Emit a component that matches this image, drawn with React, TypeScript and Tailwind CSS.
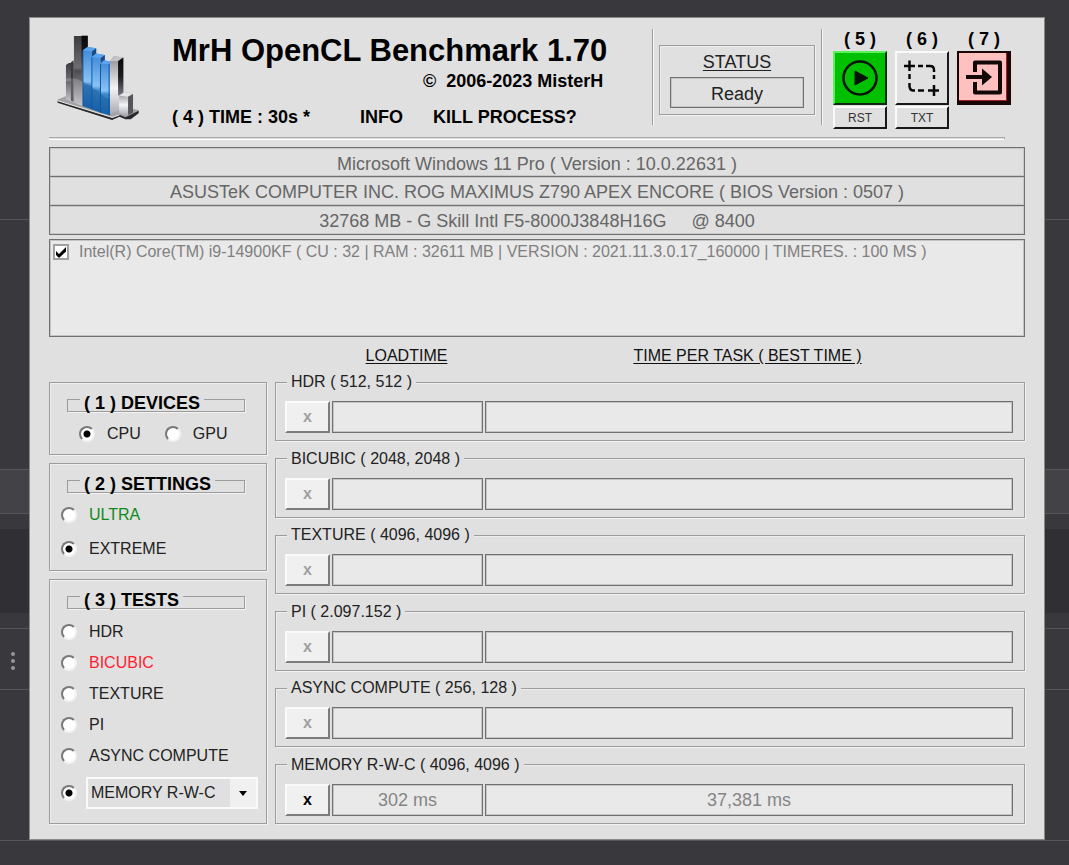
import { useState } from "react";
import clsx from "clsx";

type Result = {
  name: string;
  size: string;
  loadTime: string;
  bestTime: string;
};

const results: Result[] = [
  { name: "HDR", size: "( 512, 512 )", loadTime: "", bestTime: "" },
  { name: "BICUBIC", size: "( 2048, 2048 )", loadTime: "", bestTime: "" },
  { name: "TEXTURE", size: "( 4096, 4096 )", loadTime: "", bestTime: "" },
  { name: "PI", size: "( 2.097.152 )", loadTime: "", bestTime: "" },
  { name: "ASYNC COMPUTE", size: "( 256, 128 )", loadTime: "", bestTime: "" },
  { name: "MEMORY R-W-C", size: "( 4096, 4096 )", loadTime: "302 ms", bestTime: "37,381 ms" }
];

const systemInfo = [
  { label: "Operating system", value: "Microsoft Windows 11 Pro ( Version : 10.0.22631 )" },
  { label: "Mainboard", value: "ASUSTeK COMPUTER INC. ROG MAXIMUS Z790 APEX ENCORE ( BIOS Version : 0507 )" },
  { label: "Memory", value: "32768 MB - G Skill Intl F5-8000J3848H16G     @ 8400" }
];

const tests = [
  { name: "HDR", color: "text-[#222]" },
  { name: "BICUBIC", color: "text-[#ff2030]" },
  { name: "TEXTURE", color: "text-[#222]" },
  { name: "PI", color: "text-[#222]" },
  { name: "ASYNC COMPUTE", color: "text-[#222]" }
];

const groove = "border border-[#9c9c9c] shadow-[1px_1px_0_#f2f2f2,inset_1px_1px_0_#eeeeee]";
const edge = "border border-[#707070] shadow-[inset_0_0_0_1px_#c4c4c4]";
const field = "min-w-0 text-center outline-none";
const raised = "border-2 border-t-[#fafafa] border-l-[#fafafa]";

function Logo() {
  return (
    <svg viewBox="0 0 250 260" className="h-[87px] w-[83px] shrink-0" aria-hidden="true">
      <defs>
        <linearGradient id="steel" x1="0" y1="0" x2="0" y2="1">
          <stop offset="0" stopColor="#3c3c40" />
          <stop offset="0.45" stopColor="#6d6d72" />
          <stop offset="0.5" stopColor="#4b4b50" />
          <stop offset="1" stopColor="#b9b9c0" />
        </linearGradient>
        <linearGradient id="blue" x1="0" y1="0" x2="0" y2="1">
          <stop offset="0" stopColor="#3d86d6" />
          <stop offset="0.55" stopColor="#86c3f8" />
          <stop offset="0.62" stopColor="#3c86c8" />
          <stop offset="1" stopColor="#1768b4" />
        </linearGradient>
        <linearGradient id="silver" x1="0" y1="0" x2="0" y2="1">
          <stop offset="0" stopColor="#8d8d92" />
          <stop offset="0.55" stopColor="#f4f4f6" />
          <stop offset="1" stopColor="#a9abb4" />
        </linearGradient>
        <linearGradient id="shade" x1="0" y1="0" x2="0" y2="1">
          <stop offset="0" stopColor="#08080a" />
          <stop offset="0.5" stopColor="#1c1c1f" />
          <stop offset="1" stopColor="#77777f" />
        </linearGradient>
      </defs>
      <path d="M2 196 L28 186 L246 228 L246 236 L222 254 L206 256 L188 246 L166 257 L2 206 Z" fill="#a4a4a8" />
      <path d="M2 200 L168 252 L188 242 L206 250 L246 230 L246 238 L222 256 L206 256 L188 248 L166 258 L2 206 Z" fill="#29292c" />
      <path d="M2 200 L166 250 L188 243" fill="none" stroke="#e8e8e8" strokeWidth="3" />
      <path d="M27 92 L36 86 H50 V202 L27 196 Z" fill="url(#steel)" />
      <path d="M42 84 L50 78 V202 L42 200 Z" fill="#3a3a3e" />
      <path d="M51 5 H78 V216 L51 206 Z" fill="url(#steel)" />
      <path d="M74 4 H93 V130 H74 Z" fill="url(#shade)" />
      <path d="M78 48 L92 38 L118 42 V72 L105 52 V226 L78 216 Z" fill="url(#blue)" />
      <path d="M78 48 L92 38 L118 42 L106 52 Z" fill="#5aa5ee" />
      <path d="M105 52 L118 42 V68 L105 76 Z" fill="#1b4a86" />
      <path d="M105 68 L118 58 L144 62 V90 L131 72 V236 L105 226 Z" fill="url(#blue)" />
      <path d="M105 68 L118 58 L144 62 L132 72 Z" fill="#5aa5ee" />
      <path d="M131 72 L144 62 V84 L131 92 Z" fill="#1b4a86" />
      <path d="M131 88 L142 78 L160 82 V244 L131 236 Z" fill="url(#blue)" />
      <path d="M131 88 L142 78 L160 82 L156 90 Z" fill="#5aa5ee" />
      <path d="M105 70 V226 M131 90 V236 M157 90 V244 M78 50 V216" stroke="#1d5594" strokeWidth="3" />
      <path d="M78 142 Q110 158 131 180 Q145 192 158 196 V244 L78 217 Z" fill="#0d4f92" opacity="0.35" />
      <path d="M160 80 L172 66 L200 70 L187 80 V230 L160 240 Z" fill="url(#silver)" />
      <path d="M160 80 L174 66 L200 70 L186 80 Z" fill="#c4c4c8" />
      <path d="M184 80 L200 70 V184 H184 Z" fill="url(#shade)" />
      <path d="M187 184 L204 174 L229 180 V236 L212 244 L187 238 Z" fill="url(#silver)" />
      <path d="M187 184 L204 174 L229 180 L214 188 Z" fill="#e6e6e8" />
      <path d="M214 188 L229 180 V236 L214 243 Z" fill="#55555c" />
      <path d="M27 134 Q52 128 77 142 V216 L27 196 Z" fill="#fff" opacity="0.18" />
    </svg>
  );
}

function PlayIcon() {
  return (
    <svg viewBox="0 0 48 48" className="size-12 shrink-0" fill="none" stroke="#071207" aria-hidden="true">
      <circle cx="24" cy="24" r="16.500" strokeWidth="2.500" />
      <path d="M19 17 L32 24 L19 31 Z" fill="#071207" strokeWidth="1" />
    </svg>
  );
}

function CaptureIcon() {
  return (
    <svg viewBox="0 0 48 48" className="size-12 shrink-0" fill="none" stroke="#080808" strokeWidth="2.500" aria-hidden="true">
      <path d="M11.500 6.500 V17 M6 12 H17" />
      <path d="M20 12 H25 M28 12 H32 Q36 12 36 16 V18 M36 21 V25" />
      <path d="M11.500 20 V25 M11.500 29 V32 Q11.500 36 15 36.500 H17 M20 36.500 H26" />
      <path d="M36 31 V42 M30 36.500 H41" />
    </svg>
  );
}

function ExitIcon() {
  return (
    <svg viewBox="0 0 48 48" className="size-12 shrink-0" fill="none" stroke="#120808" strokeWidth="4" aria-hidden="true">
      <path d="M16 19 V9.500 H41 V39.500 H16 V29" strokeLinejoin="round" />
      <path d="M7 24 H26" />
      <path d="M23 15.500 L33 24 L23 32.500 Z" fill="#120808" stroke="none" />
    </svg>
  );
}

function PanelTitle({ id, children }: { id: string; children: string }) {
  return (
    <div className="mr-[21px] ml-[17px] flex h-[13px] items-end border border-[#9c9c9c] shadow-[1px_1px_0_#f2f2f2]">
      <h2 id={id} className="ml-3 bg-[#e0e0e0] px-1 text-lg leading-4 font-bold whitespace-nowrap text-black">
        {children}
      </h2>
    </div>
  );
}

type RadioProps = {
  group: string;
  label: string;
  checked: boolean;
  onSelect: () => void;
  color?: string;
};

function RadioDot({ group, label, checked, onSelect }: RadioProps) {
  return (
    <input
      type="radio"
      name={group}
      aria-label={label}
      checked={checked}
      onChange={onSelect}
      className="size-4 shrink-0 appearance-none rounded-full border-2 border-t-[#787878] border-r-[#f2f2f2] border-b-[#f2f2f2] border-l-[#787878] bg-white checked:bg-[radial-gradient(circle,#000_3px,#fff_4px)]"
    />
  );
}

function Radio(props: RadioProps) {
  return (
    <label className={clsx("flex items-center gap-3 leading-5", props.color ?? "text-[#222]")}>
      <RadioDot {...props} />
      {props.label}
    </label>
  );
}

function ResultRow({ name, size, loadTime, bestTime }: Result) {
  const done = bestTime !== "";
  return (
    <fieldset className={clsx("min-w-0 pt-2 pr-[11px] pb-[7px] pl-[9px]", groove)}>
      <legend className="ml-0.5 bg-[#e0e0e0] px-1 leading-[22px] text-[#222]">
        {name} {size}
      </legend>
      <div className="flex h-8 gap-0.5">
        <button
          type="button"
          disabled={!done}
          className={clsx(
            "w-[45px] shrink-0 border-r-[#7c7c7c] border-b-[#7c7c7c] bg-[#f0f0f0] text-base leading-none font-bold",
            raised,
            done ? "text-black" : "text-[#a0a0a0]"
          )}
        >
          x
        </button>
        <input
          readOnly
          aria-label={`${name} load time`}
          value={loadTime}
          className={clsx("w-[151px] bg-[#e9e9e9] text-lg text-[#858585]", edge, field)}
        />
        <input
          readOnly
          aria-label={`${name} best time`}
          value={bestTime}
          className={clsx("flex-1 bg-[#e9e9e9] text-lg text-[#858585]", edge, field)}
        />
      </div>
    </fieldset>
  );
}

function Backdrop() {
  return (
    <div className="col-start-1 row-start-1 flex flex-col" aria-hidden="true">
      <div className="h-[220px] border-b border-[#56555a]" />
      <div className="h-[249px]" />
      <div className="h-[45px] border-y border-[#56555a] bg-[#434247]" />
      <div className="h-[15px]" />
      <div className="h-[84px] bg-[#302f34]" />
      <div className="h-4 border-b border-[#56555a]" />
      <div className="flex h-[61px] flex-col justify-center gap-[3px] border-b border-[#56555a] pt-1 pl-[11px]">
        <span className="size-1 rounded-full bg-[#97969b]" />
        <span className="size-1 rounded-full bg-[#97969b]" />
        <span className="size-1 rounded-full bg-[#97969b]" />
      </div>
      <div className="h-[151px] border-b border-[#56555a]" />
    </div>
  );
}

export default function App() {
  const [device, setDevice] = useState("CPU");
  const [setting, setSetting] = useState("EXTREME");
  const [test, setTest] = useState("MEMORY R-W-C");
  const [deviceEnabled, setDeviceEnabled] = useState(true);

  return (
    <div className="grid min-h-screen bg-[#39383d] font-['Liberation_Sans',Arial,sans-serif] text-base">
      <Backdrop />
      <main className="relative col-start-1 row-start-1 mt-[17px] mr-6 mb-[25px] ml-[29px] border border-[#8a8a8a] bg-[#e0e0e0] px-[19px]">
        <header className="flex h-[119px]">
          <div className="w-[123px] shrink-0 pt-4 pl-2">
            <Logo />
          </div>
          <div className="flex shrink-0 flex-col pt-3">
            <h1 className="text-[31px] leading-[42px] font-bold whitespace-nowrap text-black">
              MrH OpenCL Benchmark 1.70
            </h1>
            <p className="pr-1 text-right text-lg leading-[18px] font-bold whitespace-pre text-black">
              {"©  2006-2023 MisterH"}
            </p>
            <div className="flex pt-[17px] text-lg leading-5 font-bold text-black">
              <button type="button" className="w-[188px] text-left">( 4 ) TIME : 30s *</button>
              <button type="button" className="w-[73px] text-left">INFO</button>
              <button type="button">KILL PROCESS?</button>
            </div>
          </div>

          <div className="ml-auto flex pr-[14px]">
            <div className="mt-[11px] h-24 w-0.5 border-r border-l border-l-[#9c9c9c] border-r-[#f6f6f6]" />
            <div className={clsx("mt-[27px] ml-[5px] h-[70px] w-[156px] px-[10px]", groove)}>
              <label htmlFor="status" className="block pt-1 text-center text-lg leading-6 text-[#222] underline underline-offset-2">
                STATUS
              </label>
              <input id="status" readOnly value="Ready" className={clsx("mt-[3px] h-[31px] w-full bg-transparent pt-1 text-lg text-[#222]", edge, field)} />
            </div>
            <div className="mt-[11px] ml-[6px] h-24 w-0.5 border-r border-l border-l-[#9c9c9c] border-r-[#f6f6f6]" />
            <div className="ml-[10px] grid grid-cols-3 content-start gap-x-2 gap-y-px pt-[10px] text-center">
              <span className="text-lg leading-[22px] font-bold text-black">( 5 )</span>
              <span className="text-lg leading-[22px] font-bold text-black">( 6 )</span>
              <span className="text-lg leading-[22px] font-bold text-black">( 7 )</span>
              <button type="button" aria-label="Start" className="flex h-[54px] w-[54px] items-center justify-center border-2 border-t-[#5cf05c] border-r-[#102810] border-b-[#102810] border-l-[#5cf05c] bg-[#00c000]">
                <PlayIcon />
              </button>
              <button type="button" aria-label="Screenshot" className={clsx("flex h-[54px] w-[54px] items-center justify-center border-r-[#181818] border-b-[#181818]", raised)}>
                <CaptureIcon />
              </button>
              <button type="button" aria-label="Exit" className="flex h-[54px] w-[54px] items-center justify-center border-2 border-r-4 border-b-4 border-[#1a0606] bg-[#ffc0c0] shadow-[inset_-1px_-1px_0_#a02020]">
                <ExitIcon />
              </button>
              <button type="button" className={clsx("h-[23px] border-r-[#181818] border-b-[#181818] text-xs text-[#333]", raised)}>RST</button>
              <button type="button" className={clsx("h-[23px] border-r-[#181818] border-b-[#181818] text-xs text-[#333]", raised)}>TXT</button>
            </div>
          </div>
        </header>

        <div className="mr-5 h-[3px] border-t border-r border-b border-t-[#a8a8a8] border-r-[#a8a8a8] border-b-white" />

        <section aria-label="System" className="mt-[7px] border border-[#707070]">
          {systemInfo.map(({ label, value }, index) => (
            <input
              key={label}
              readOnly
              aria-label={label}
              value={value}
              className={clsx(
                "block w-full bg-transparent pt-[3px] text-center text-lg text-[#666] shadow-[inset_0_0_0_1px_#c8c8c8] outline-none",
                index === 0 ? "h-7" : "h-[29px] border-t border-[#707070]"
              )}
            />
          ))}
        </section>

        <section aria-label="Compute devices" className={clsx("mt-[4px] h-[98px] bg-[#e9e9e9] px-[3px] pt-px", edge)}>
          <label className="flex items-center gap-[10px] leading-[22px] whitespace-nowrap text-[#808080]">
            <span className="grid size-4 shrink-0">
              <input
                type="checkbox"
                checked={deviceEnabled}
                onChange={(e) => setDeviceEnabled(e.target.checked)}
                className="peer col-start-1 row-start-1 size-4 appearance-none border-2 border-[#a0a0a0] bg-white"
              />
              <svg viewBox="0 0 16 16" className="pointer-events-none invisible col-start-1 row-start-1 size-4 peer-checked:visible" aria-hidden="true">
                <path d="M3 7 L6 10 L13 3 V7.500 L6 14 L3 11 Z" fill="#000" />
              </svg>
            </span>
            Intel(R) Core(TM) i9-14900KF ( CU : 32 | RAM : 32611 MB | VERSION : 2021.11.3.0.17_160000 | TIMERES. : 100 MS )
          </label>
        </section>

        <div className="flex pt-[9px] pr-[12px] pb-[5px] pl-[282px] text-center leading-5 text-[#111] underline underline-offset-2">
          <span className="w-[151px]">LOADTIME</span>
          <span className="flex-1">TIME PER TASK ( BEST TIME )</span>
        </div>

        <div className="flex gap-2 pb-[15px]">
          <div className="flex w-[218px] shrink-0 flex-col gap-2 pt-[11px]">
            <div role="radiogroup" aria-labelledby="devices" className={clsx("h-[73px] pt-4", groove)}>
              <PanelTitle id="devices">( 1 ) DEVICES</PanelTitle>
              <div className="flex gap-6 pt-3 pl-[29px]">
                {["CPU", "GPU"].map((name) => (
                  <Radio key={name} group="device" label={name} checked={device === name} onSelect={() => setDevice(name)} />
                ))}
              </div>
            </div>

            <div role="radiogroup" aria-labelledby="settings" className={clsx("h-[108px] pt-4", groove)}>
              <PanelTitle id="settings">( 2 ) SETTINGS</PanelTitle>
              <div className="flex flex-col gap-[14px] pt-3 pl-[11px]">
                <Radio group="setting" label="ULTRA" color="text-[#108a18]" checked={setting === "ULTRA"} onSelect={() => setSetting("ULTRA")} />
                <Radio group="setting" label="EXTREME" checked={setting === "EXTREME"} onSelect={() => setSetting("EXTREME")} />
              </div>
            </div>

            <div role="radiogroup" aria-labelledby="tests" className={clsx("h-[245px] pt-4", groove)}>
              <PanelTitle id="tests">( 3 ) TESTS</PanelTitle>
              <div className="flex flex-col gap-[11px] pt-[13px] pl-[11px]">
                {tests.map(({ name, color }) => (
                  <Radio key={name} group="test" label={name} color={color} checked={test === name} onSelect={() => setTest(name)} />
                ))}
                <div className="flex items-center gap-[9px] pr-2">
                  <RadioDot group="test" label="MEMORY R-W-C" checked={test === "MEMORY R-W-C"} onSelect={() => setTest("MEMORY R-W-C")} />
                  <div className="relative h-8 flex-1 border-2 border-[#fafafa]">
                    <select aria-label="Memory test" className="h-full w-full appearance-none bg-[#e0e0e0] pl-[3px] text-base text-[#222] outline-none">
                      <option>MEMORY R-W-C</option>
                      <option>MEMORY READ</option>
                      <option>MEMORY WRITE</option>
                      <option>MEMORY COPY</option>
                    </select>
                    <span className="pointer-events-none absolute inset-y-0 right-0 flex w-[26px] items-center justify-center bg-[#f0f0f0]">
                      <svg viewBox="0 0 8 5" className="h-[5px] w-2" aria-hidden="true">
                        <path d="M0 0 H8 L4 5 Z" fill="#000" />
                      </svg>
                    </span>
                  </div>
                </div>
              </div>
            </div>
          </div>

          <div className="flex min-w-0 flex-1 flex-col justify-between">
            {results.map((result) => (
              <ResultRow key={result.name} {...result} />
            ))}
          </div>
        </div>
      </main>
    </div>
  );
}
